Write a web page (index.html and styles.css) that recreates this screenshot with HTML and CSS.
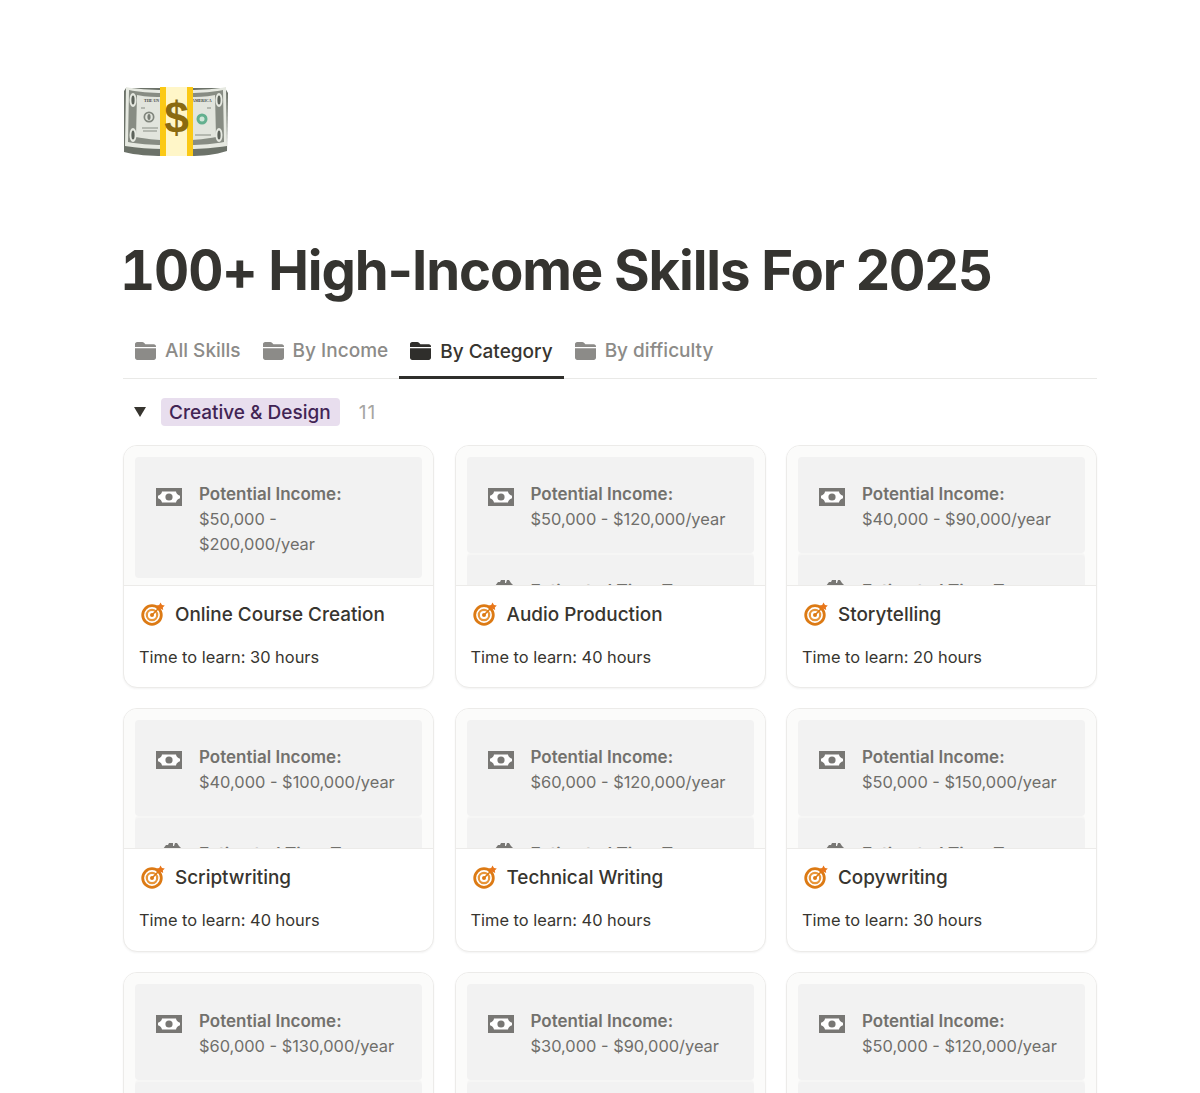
FILE: index.html
```html
<!DOCTYPE html>
<html lang="en">
<head>
<meta charset="utf-8">
<title>100+ High-Income Skills For 2025</title>
<link rel="stylesheet" href="styles.css">
</head>
<body>
<svg class="defs" width="0" height="0" aria-hidden="true">
  <defs>
    <symbol id="folder" viewBox="0 0 21 18">
      <path d="M0 2.2C0 1 .9 0 2.2 0h5c.8 0 1.3.3 1.8.8L10.400 2.300H18.800c1.300 0 2.200 1 2.200 2.200V5H0Z"/>
      <path d="M0 6.300H21V15.600c0 1.300-1 2.400-2.300 2.400H2.300C1 18 0 16.900 0 15.600Z"/>
    </symbol>
    <symbol id="money" viewBox="0 0 26 18">
      <path fill="#787774" d="M0 0H26V18H0Z"/>
      <path fill="#fff" d="M6 3.500H20C20.300 5.500 21.500 7 24 7.800V10.200C21.500 11 20.300 12.500 20 14.500H6C5.700 12.500 4.500 11 2 10.200V7.800C4.500 7 5.700 5.500 6 3.500Z"/>
      <circle fill="#787774" cx="13" cy="9" r="3.600"/>
    </symbol>
    <symbol id="time" viewBox="0 0 20 18">
      <path fill="#787774" d="M0 6 3 2H5L6 0H10V3L11 3 12 0H14L16 3 19 6 20 18H0Z"/>
    </symbol>
    <symbol id="target" viewBox="0 0 24 24">
      <circle cx="11" cy="13" r="9.300" fill="none" stroke="#dc7a14" stroke-width="2.800"/>
      <circle cx="11" cy="13" r="5.200" fill="none" stroke="#e8963a" stroke-width="2.200"/>
      <circle cx="11" cy="13" r="2" fill="#dc7a14"/>
      <path d="M11 13 19 5" stroke="#dc7a14" stroke-width="1.600"/>
      <path fill="#e8761a" d="M19.500 0.500 21 3 23.800 3.400 21.800 5.400 22.200 8 19.500 6.800 17 8 17.400 5.400 15.500 3.400 18.200 3Z"/>
    </symbol>
  </defs>
</svg>

<main class="page">
  <svg class="page-icon" viewBox="0 0 105 72" role="img" aria-label="Banknotes">
    <path fill="#6c7269" d="M1 6 3 3H102L105 8 104 66C92 70 80 71 66 71H40C28 71 12 70 1 67Z"/>
    <path fill="#e6e9e1" d="M3 2C12 4 28 5 40 5H66C80 5 94 4 103 2L104 61C90 63 80 64 66 64H40C28 64 14 63 2 61Z"/>
    <path fill="#878c83" d="M6 5C15 7 28 8 40 8H66C80 8 90 7 100 5L101 57C90 59 80 60 66 60H40C28 60 15 59 5 57Z"/>
    <path fill="#e2e5dd" d="M14 10C24 12 32 12 40 12H66C74 12 82 12 92 10L93 52C82 54 74 55 66 55H40C32 55 24 54 13 52Z"/>
    <text class="note-text" x="21" y="17">THE UN</text>
    <text class="note-text" x="69" y="17">AMERICA</text>
    <ellipse cx="10" cy="15" rx="3.500" ry="7" fill="#e6e9e1"/>
    <ellipse cx="10" cy="15" rx="1.600" ry="4.500" fill="#5c625a"/>
    <ellipse cx="10" cy="50" rx="3.500" ry="7" fill="#e6e9e1"/>
    <ellipse cx="10" cy="50" rx="1.600" ry="4.500" fill="#5c625a"/>
    <ellipse cx="96" cy="15" rx="3.500" ry="7" fill="#e6e9e1"/>
    <ellipse cx="96" cy="15" rx="1.600" ry="4.500" fill="#5c625a"/>
    <ellipse cx="96" cy="50" rx="3.500" ry="7" fill="#e6e9e1"/>
    <ellipse cx="96" cy="50" rx="1.600" ry="4.500" fill="#5c625a"/>
    <circle cx="26" cy="32" r="5.500" fill="#81867d"/>
    <circle cx="26" cy="32" r="3.800" fill="#e2e5dd"/>
    <ellipse cx="26" cy="32" rx="1.600" ry="3" fill="#777c74"/>
    <circle cx="79" cy="34" r="5.500" fill="#63b08f"/>
    <circle cx="79" cy="34" r="2.500" fill="#cfe6d8"/>
    <path d="M19 43H35M20 46H34M72 50H88M18 23H22M84 23H88" stroke="#878c83" stroke-width="1"/>
    <rect x="37" y="2" width="33" height="69" fill="#fff6c8"/>
    <rect x="37" y="2" width="6" height="69" fill="#fbc915"/>
    <rect x="64" y="2" width="6" height="69" fill="#fbc915"/>
    <text class="dollar" x="53.500" y="48" text-anchor="middle">$</text>
  </svg>

  <h1 class="title"><span class="title-num">100+</span> High-Income Skills For 2025</h1>

  <nav class="tabs">
    <a class="tab"><svg class="folder"><use href="#folder"/></svg>All Skills</a>
    <a class="tab"><svg class="folder"><use href="#folder"/></svg>By Income</a>
    <a class="tab tab-active"><svg class="folder"><use href="#folder"/></svg>By Category</a>
    <a class="tab"><svg class="folder"><use href="#folder"/></svg>By difficulty</a>
  </nav>

  <div class="group">
    <span class="caret"></span>
    <span class="tag">Creative &amp; Design</span>
    <span class="count">11</span>
  </div>

  <section class="grid">
    <article class="card">
      <div class="cover">
        <div class="block"><svg class="ico"><use href="#money"/></svg><p class="lines"><b>Potential Income:</b><br>$50,000 -<br>$200,000/year</p></div>
      </div>
      <div class="body"><h2 class="name"><svg class="target"><use href="#target"/></svg>Online Course Creation</h2><p class="meta">Time to learn: 30 hours</p></div>
    </article>
    <article class="card">
      <div class="cover">
        <div class="block"><svg class="ico"><use href="#money"/></svg><p class="lines"><b>Potential Income:</b><br>$50,000 - $120,000/year</p></div>
        <div class="block block-next"><svg class="ico ico-time"><use href="#time"/></svg><p class="lines"><b>Estimated Time To</b></p></div>
      </div>
      <div class="body"><h2 class="name"><svg class="target"><use href="#target"/></svg>Audio Production</h2><p class="meta">Time to learn: 40 hours</p></div>
    </article>
    <article class="card">
      <div class="cover">
        <div class="block"><svg class="ico"><use href="#money"/></svg><p class="lines"><b>Potential Income:</b><br>$40,000 - $90,000/year</p></div>
        <div class="block block-next"><svg class="ico ico-time"><use href="#time"/></svg><p class="lines"><b>Estimated Time To</b></p></div>
      </div>
      <div class="body"><h2 class="name"><svg class="target"><use href="#target"/></svg>Storytelling</h2><p class="meta">Time to learn: 20 hours</p></div>
    </article>
    <article class="card">
      <div class="cover">
        <div class="block"><svg class="ico"><use href="#money"/></svg><p class="lines"><b>Potential Income:</b><br>$40,000 - $100,000/year</p></div>
        <div class="block block-next"><svg class="ico ico-time"><use href="#time"/></svg><p class="lines"><b>Estimated Time To</b></p></div>
      </div>
      <div class="body"><h2 class="name"><svg class="target"><use href="#target"/></svg>Scriptwriting</h2><p class="meta">Time to learn: 40 hours</p></div>
    </article>
    <article class="card">
      <div class="cover">
        <div class="block"><svg class="ico"><use href="#money"/></svg><p class="lines"><b>Potential Income:</b><br>$60,000 - $120,000/year</p></div>
        <div class="block block-next"><svg class="ico ico-time"><use href="#time"/></svg><p class="lines"><b>Estimated Time To</b></p></div>
      </div>
      <div class="body"><h2 class="name"><svg class="target"><use href="#target"/></svg>Technical Writing</h2><p class="meta">Time to learn: 40 hours</p></div>
    </article>
    <article class="card">
      <div class="cover">
        <div class="block"><svg class="ico"><use href="#money"/></svg><p class="lines"><b>Potential Income:</b><br>$50,000 - $150,000/year</p></div>
        <div class="block block-next"><svg class="ico ico-time"><use href="#time"/></svg><p class="lines"><b>Estimated Time To</b></p></div>
      </div>
      <div class="body"><h2 class="name"><svg class="target"><use href="#target"/></svg>Copywriting</h2><p class="meta">Time to learn: 30 hours</p></div>
    </article>
    <article class="card">
      <div class="cover">
        <div class="block"><svg class="ico"><use href="#money"/></svg><p class="lines"><b>Potential Income:</b><br>$60,000 - $130,000/year</p></div>
        <div class="block block-next"></div>
      </div>
    </article>
    <article class="card">
      <div class="cover">
        <div class="block"><svg class="ico"><use href="#money"/></svg><p class="lines"><b>Potential Income:</b><br>$30,000 - $90,000/year</p></div>
        <div class="block block-next"></div>
      </div>
    </article>
    <article class="card">
      <div class="cover">
        <div class="block"><svg class="ico"><use href="#money"/></svg><p class="lines"><b>Potential Income:</b><br>$50,000 - $120,000/year</p></div>
        <div class="block block-next"></div>
      </div>
    </article>
  </section>
</main>
</body>
</html>
```
FILE: styles.css
```css
* { box-sizing: border-box; }
html, body { margin: 0; height: 1093px; overflow: hidden; background: #fff; }
body { font-family: Inter, "Liberation Sans", sans-serif; color: #37352f; }
.defs { position: absolute; }
.page { display: flex; flex-direction: column; padding: 85px 103px 0 123px; }

.page-icon { display: block; width: 105px; height: 72px; flex: none; }
.note-text { font: 700 4px "Liberation Serif", serif; fill: #3f443e; }
.dollar { font: 700 44px "Liberation Sans", sans-serif; fill: #8a6a10; }

.title { margin: 80px 0 0 -3px; font-size: 54.500px; line-height: 66px; font-weight: 700; letter-spacing: -1.120px; color: #353430; white-space: nowrap; }
.title-num { font-variant-numeric: tabular-nums; }

.tabs { display: flex; margin-top: 20px; padding-left: 1px; height: 56px; border-bottom: 1.500px solid #e9e9e7; }
.tab { display: flex; align-items: center; gap: 9px; height: 55px; padding: 0 11px; font-size: 19px; font-weight: 500; color: #8c8b88; }
.tab-active { color: #37352f; border-bottom: 3px solid #2f2e2b; height: 56px; padding-top: 3px; }
.tab .folder { width: 21px; height: 18px; fill: #8c8b88; }
.tab-active .folder { fill: #2f2e2b; }

.group { display: flex; align-items: center; height: 28px; margin-top: 19px; padding-left: 11px; }
.caret { width: 0; height: 0; border-left: 6px solid transparent; border-right: 6px solid transparent; border-top: 10px solid #37352f; margin-right: 15px; }
.tag { display: flex; align-items: center; height: 28px; padding: 0 9px 0 8px; background: #e8deee; border-radius: 4px; color: #412454; font-size: 19px; font-weight: 500; white-space: nowrap; }
.count { margin-left: 19px; color: #a6a5a2; font-size: 19px; letter-spacing: 1px; }

.grid { display: grid; grid-template-columns: repeat(3, 1fr); column-gap: 20.500px; row-gap: 20px; margin-top: 19px; }
.card { height: 243.250px; border: 1px solid #ecebe9; border-radius: 14px; overflow: hidden; background: #fff; box-shadow: 0 1px 2px rgba(55,53,47,.06); display: flex; flex-direction: column; }
.cover { height: 140px; flex: none; overflow: hidden; background: #fbfbfa; border-bottom: 1px solid #ecebe9; padding: 11px 11px 0; }
.block { display: flex; align-items: flex-start; gap: 17px; padding: 25px 20px 21px 21px; background: #f2f2f2; border-radius: 4px; }
.block-next { margin-top: 2px; padding-top: 21px; min-height: 40px; box-shadow: 0 -2px 0 #f6f6f5; }
.ico { width: 26px; height: 18px; flex: none; margin-top: 6px; }
.ico-time { width: 20px; margin-left: 7px; margin-right: -1px; margin-top: 4px; }
.block-next .lines { margin-top: 3px; }
.lines { margin: 0; font-size: 16.400px; line-height: 25px; color: #6f6e6a; }
.lines b { font-size: 17px; font-weight: 600; color: #72716d; }

.body { display: flex; flex-direction: column; padding: 0 15px; }
.name { display: flex; align-items: center; gap: 10px; margin: 13px 0 0 2px; height: 30px; font-size: 18.900px; font-weight: 500; color: #37352f; white-space: nowrap; }
.target { width: 24px; height: 24px; flex: none; }
.meta { margin: 16px 0 0; font-size: 16.400px; line-height: 24px; color: #37352f; white-space: nowrap; }
```
